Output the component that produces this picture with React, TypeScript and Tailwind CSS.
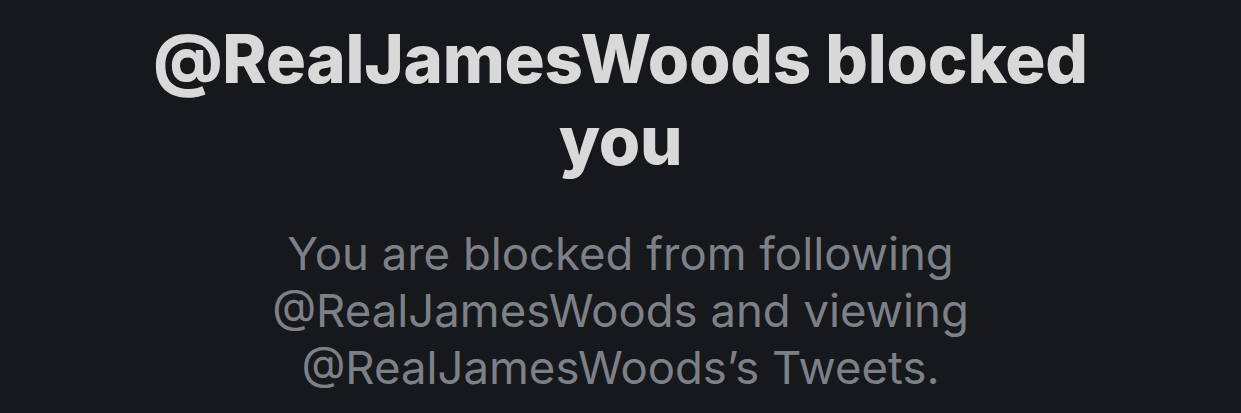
export default function App() {
  return (
    <div className="w-[1241px] h-[413px] bg-[#17181c] overflow-hidden flex flex-col items-center" style={{ fontFamily: 'Inter, "Noto Sans", sans-serif' }}>
      <h1 className="mt-[18px] text-[67px] leading-[82px] font-extrabold text-[#d9d9d9] text-center tracking-[-0.25px] w-[960px]">
        @RealJamesWoods blocked you
      </h1>
      <p className="mt-[43px] text-[45.5px] leading-[57px] text-[#7d8088] text-center w-[820px]">
        You are blocked from following @RealJamesWoods and viewing @RealJamesWoods’s Tweets.
      </p>
    </div>
  );
}
